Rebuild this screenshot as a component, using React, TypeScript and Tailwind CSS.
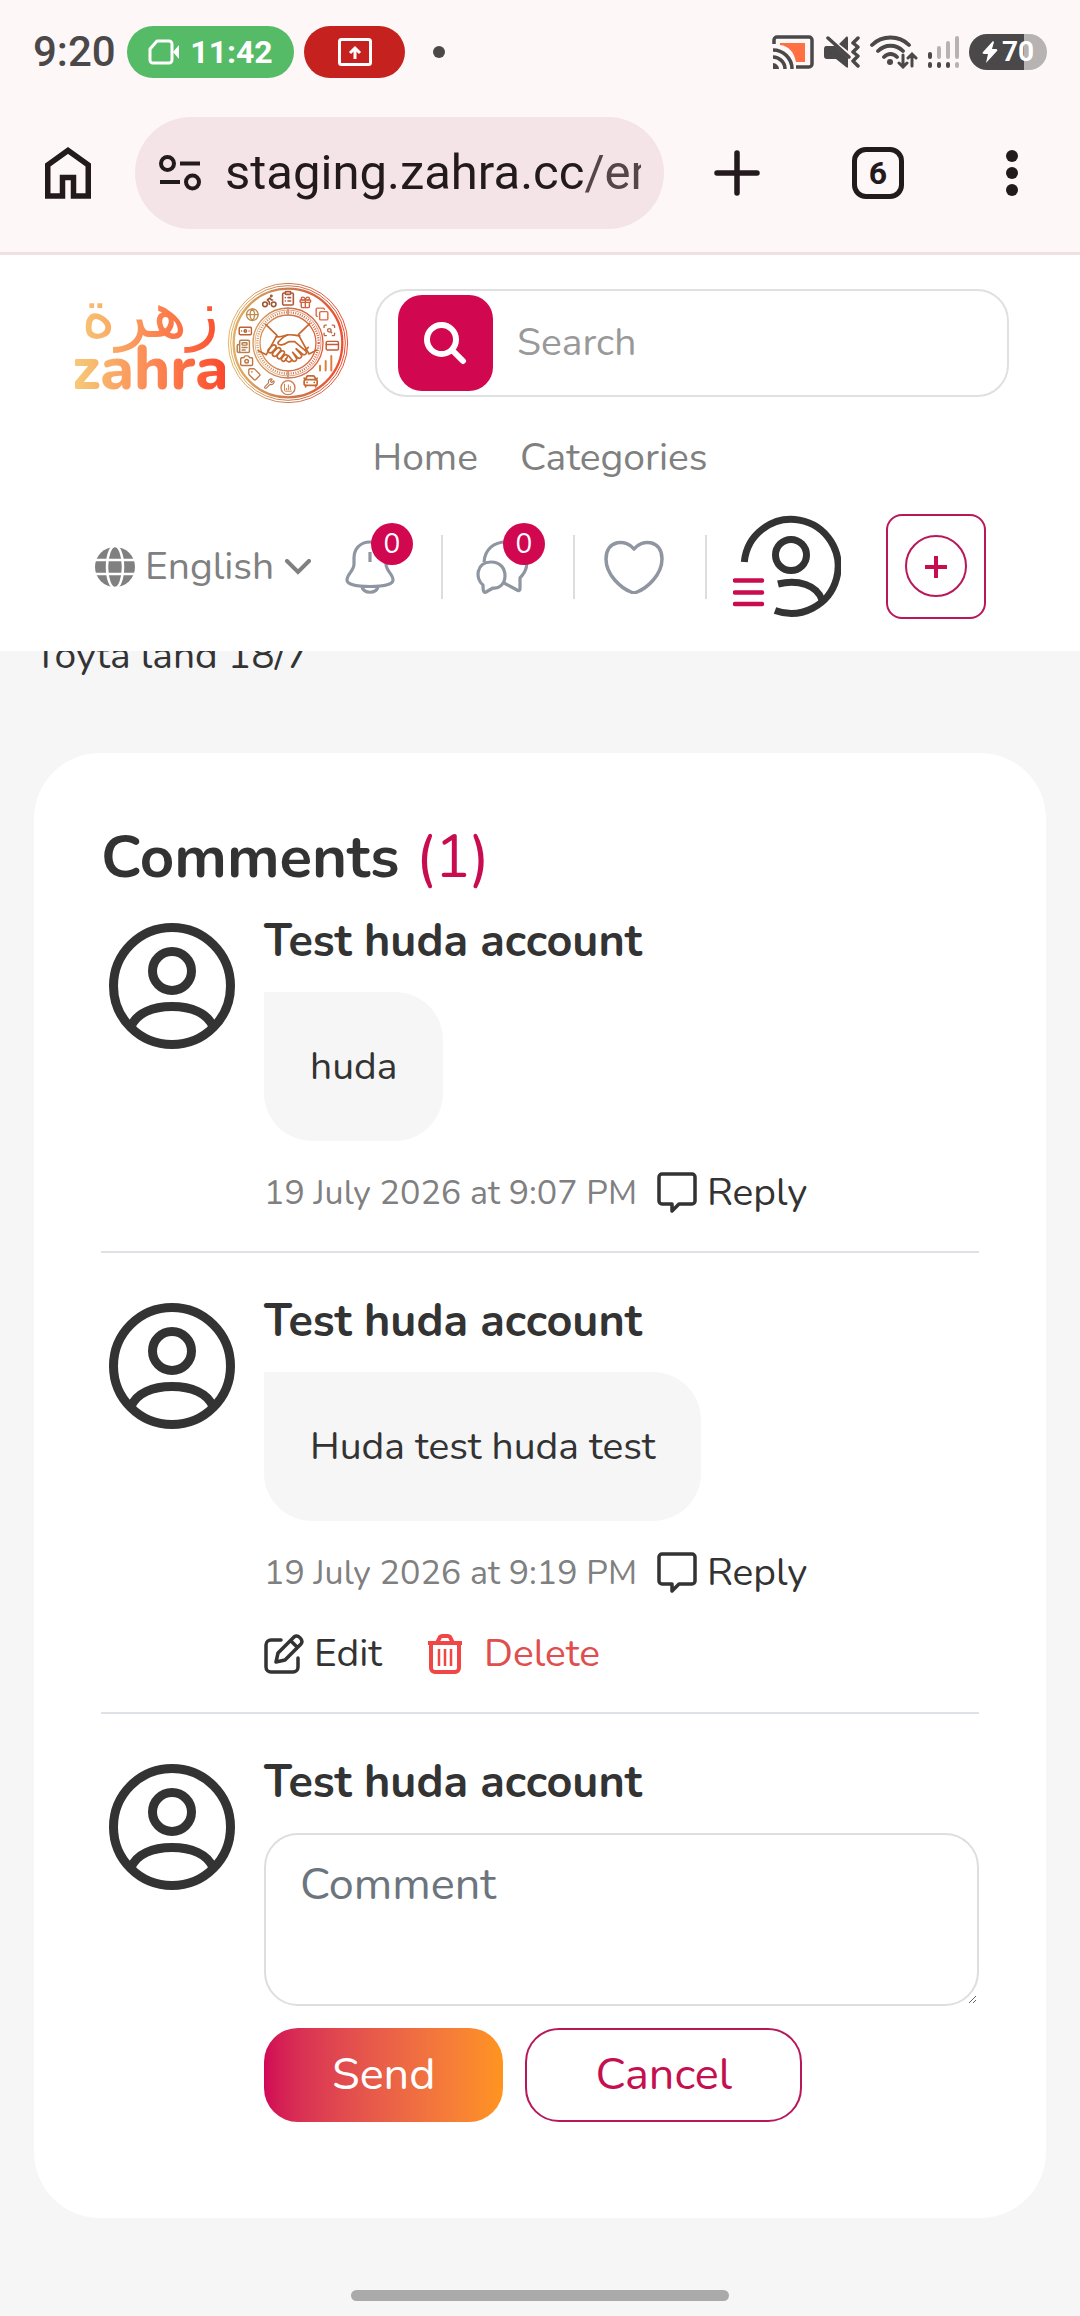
import React, { useState } from 'react';
import {
  Bike, Camera, CarFront, ChartColumn, ChartNoAxesColumnIncreasing, ClipboardList, Copy, CreditCard,
  Banknote, Gift, Globe, Newspaper, ScanSearch, Tag, Wrench,
} from 'lucide-react';

interface Comment {
  id: number;
  author: string;
  text: string;
  date: string;
  own?: boolean;
}

const COMMENTS: Comment[] = [
  { id: 1, author: 'Test huda account', text: 'huda', date: '19 July 2026 at 9:07 PM' },
  { id: 2, author: 'Test huda account', text: 'Huda test huda test', date: '19 July 2026 at 9:19 PM', own: true },
];

// Icons round the logo seal, clockwise from the top
const SEAL_ICONS = [
  { Icon: ClipboardList, x: 205, y: 67, size: 48, color: '#b0583a' },
  { Icon: Gift, x: 257, y: 79, size: 42, color: '#d0603f' },
  { Icon: Copy, x: 307, y: 114, size: 42, color: '#dc6c42' },
  { Icon: ScanSearch, x: 329, y: 163, size: 42, color: '#b96a48' },
  { Icon: CreditCard, x: 338, y: 209, size: 44, color: '#c65a34' },
  { Icon: ChartNoAxesColumnIncreasing, x: 318, y: 262, size: 58, color: '#e07c3c' },
  { Icon: CarFront, x: 273, y: 315, size: 52, color: '#c56834' },
  { Icon: ChartColumn, x: 205, y: 335, size: 28, color: '#cf7842' },
  { Icon: Wrench, x: 149, y: 323, size: 34, color: '#b57a58' },
  { Icon: Tag, x: 104, y: 295, size: 40, color: '#c27a48' },
  { Icon: Camera, x: 81, y: 254, size: 43, color: '#bd7644' },
  { Icon: Newspaper, x: 71, y: 211, size: 44, color: '#b5804e' },
  { Icon: Banknote, x: 77, y: 165, size: 44, color: '#bd6034' },
  { Icon: Globe, x: 98, y: 116, size: 42, color: '#c28c50' },
  { Icon: Bike, x: 149, y: 74, size: 48, color: '#9c5836' },
];

function Seal() {
  return (
    <svg className="w-[122px] h-[122px] shrink-0" viewBox="22 18 366 366" fill="none" aria-hidden="true">
      <defs>
        <linearGradient id="seal" gradientUnits="userSpaceOnUse" x1="24" y1="0" x2="386" y2="0">
          <stop offset="0" stopColor="#e5b566" />
          <stop offset="0.5" stopColor="#c97a50" />
          <stop offset="1" stopColor="#f04a2d" />
        </linearGradient>
      </defs>
      <g stroke="url(#seal)">
        <circle cx="205" cy="201" r="179" strokeWidth="3" />
        <circle cx="205" cy="201" r="172" strokeWidth="3" />
        <circle cx="205" cy="201" r="163" strokeWidth="7" />
        <circle cx="205" cy="201" r="105" strokeWidth="4" />
        <circle cx="205" cy="201" r="99" strokeWidth="2" />
        <circle cx="205" cy="201" r="92" strokeWidth="7" strokeDasharray="3 4" />
        <circle cx="205" cy="201" r="84" strokeWidth="4" />
        <circle cx="205" cy="335" r="21" strokeWidth="4" />
      </g>
      <path d="M205 95v24M205 283v24" stroke="#c98060" strokeWidth="4" />
      {/* Handshake */}
      <g stroke="#c56830" strokeWidth="5" strokeLinejoin="round" strokeLinecap="round">
        <path d="M138 145l34 33-32 58-24-12" />
        <path d="M270 143l-34 33 32 58 24-12" />
        <path d="M170 182c14 2 20-2 32-5 14-3 24 2 38 2" />
        <path d="M204 177c-16 4-20 14-29 22-2 6 6 9 14 7 10-2 14-9 22-9h14l32 27c8 7-1 16-9 10l-18-15" />
        <path d="M230 219l14 16c6 8-4 16-11 9l-14-15M219 229l11 17c4 8-7 14-13 6l-10-13" />
        <path d="M217 252c-6 10-17 5-19-3" />
        <path d="M147 219l11-10c8-6 15 3 9 9l-9 10c-8 6-18-2-11-9zM163 226l9-9c8-6 15 3 9 9l-11 13c-8 6-16-3-9-10zM176 234l8-8c8-5 14 3 8 9l-8 11c-7 6-15-2-10-9zM190 242l5-5c7-3 11 3 7 8l-6 9c-6 5-13-1-10-7z" />
        <path d="M256 222l10-8" />
      </g>
      {SEAL_ICONS.map(({ Icon, x, y, size, color }) => (
        <Icon key={`${x}-${y}`} x={x - size / 2} y={y - size / 2} width={size} height={size} color={color} strokeWidth={2.4} />
      ))}
    </svg>
  );
}

function Avatar() {
  return (
    <svg className="w-[126px] h-[126px]" viewBox="0 0 126 126" fill="none" stroke="#333333" strokeWidth="9" aria-hidden="true">
      <circle cx="63" cy="63" r="58.5" />
      <circle cx="63" cy="48" r="19.5" />
      <path d="M22 104c5-14 22-20.500 41-20.500s36 6.500 41 20.500" />
    </svg>
  );
}

function StatusBar() {
  return (
    <div className="h-26 pl-[33px] pr-[33px] flex items-center font-['Roboto',sans-serif] text-[#4a4849]">
      <span className="w-[82px] text-[42px] leading-none font-medium">9:20</span>
      <div className="ml-3 h-[52px] w-[167px] rounded-full bg-[#56bb66] text-white flex items-center justify-center gap-[10px]">
        <svg className="w-8 h-[26px]" viewBox="0 0 32 26" fill="none" aria-hidden="true">
          <path d="M9 2h12a3 3 0 0 1 3 3v16a3 3 0 0 1-3 3H5a3 3 0 0 1-3-3V10z" stroke="white" strokeWidth="3" strokeLinejoin="round" />
          <path d="M25 13l6-7v14z" fill="white" />
        </svg>
        <span className="text-[32px] leading-none font-bold">11:42</span>
      </div>
      <div className="ml-[10px] h-[52px] w-[101px] rounded-full bg-[#c5221f] flex items-center justify-center">
        <svg className="w-[34px] h-7" viewBox="0 0 34 28" fill="none" stroke="white" strokeWidth="3" aria-hidden="true">
          <rect x="1.500" y="1.500" width="31" height="25" rx="2" />
          <path d="M17 21V10M12 15l5-5 5 5" />
        </svg>
      </div>
      <div className="ml-7 size-3 rounded-full bg-[#4a4849]" />

      <div className="ml-auto flex items-center gap-[10px]">
        {/* Cast */}
        <svg className="w-[42px] h-[34px]" viewBox="0 0 42 34" fill="none" stroke="#4a4849" strokeWidth="3.500" aria-hidden="true">
          <path d="M8 8h25v19h-9C22 17 17 11 8 10z" fill="#ff7043" stroke="none" />
          <path d="M2 9V5a3 3 0 0 1 3-3h32a3 3 0 0 1 3 3v24a3 3 0 0 1-3 3H24" />
          <path d="M1 15c10 0 19 8 19 19M1 22c6 0 12 5 12 12" />
          <path d="M1 28c3 0 6 3 6 6H1z" fill="#4a4849" stroke="none" />
        </svg>
        {/* Muted, vibrating */}
        <svg className="w-9 h-8" viewBox="0 0 36 32" fill="#4a4849" aria-hidden="true">
          <path d="M2 10h9L24 22v9c0 1-1 1-2 0l-10-8H3c-2 0-3-1-3-3v-7c0-2 1-3 2-3zM15 8l7-7c1-1 2 0 2 1v13z" />
          <path d="M4 2l21 19" stroke="#4a4849" strokeWidth="3.500" strokeLinecap="round" />
          <path d="M34 2l-5 5 5 4-5 5 5 4-5 5 5 5" fill="none" stroke="#4a4849" strokeWidth="3.500" strokeLinecap="round" strokeLinejoin="round" />
        </svg>
        {/* Wifi */}
        <svg className="w-12 h-[34px]" viewBox="0 0 48 34" fill="none" stroke="#4a4849" strokeWidth="3.800" strokeLinecap="round" aria-hidden="true">
          <path d="M2 10c10-10 27-10 37 0M8 16c7-7 18-7 25 0M14 22c4-4 9-4 13 0" />
          <circle cx="20" cy="27" r="3" fill="#4a4849" stroke="none" />
          <path d="M33 20v12M29 28l4 4 4-4M42 31V19M38 23l4-4 4 4" strokeWidth="3" />
        </svg>
        {/* Signal */}
        <svg className="w-[31px] h-[34px]" viewBox="0 0 31 34" fill="none" strokeWidth="4" strokeLinecap="round" aria-hidden="true">
          <path d="M11 13v9M20 8v14M29 3v19M29 29v2" stroke="#b7b3b3" />
          <path d="M2 19v3M2 29v2M11 29v2M20 29v2" stroke="#4a4849" />
        </svg>
        <div className="w-[78px] h-9 rounded-full bg-linear-to-r from-[#4a4849] from-70% to-[#b7b3b3] to-70% flex items-center justify-center gap-1 text-white">
          <svg className="w-4 h-[22px]" viewBox="0 0 16 22" fill="white" aria-hidden="true">
            <path d="M11 0L1 11c-1 1 0 2 1 2h4L4 22l11-12c1-1 0-2-1-2h-4l2-7z" />
          </svg>
          <span className="text-[28px] leading-none font-bold">70</span>
        </div>
      </div>
    </div>
  );
}

function BrowserBar() {
  return (
    <div className="pt-[13px] pb-[23px] pl-[45px] pr-[62px] border-b-3 border-[#efe1e3] flex items-center text-[#231a1d]">
      <button aria-label="Home page">
        <svg className="w-[46px] h-[52px]" viewBox="0 0 46 52" fill="none" stroke="currentColor" strokeWidth="5.500" aria-hidden="true">
          <path d="M2.750 18L23 3.500 43.250 18v31H28.500V30.500h-11V49H2.750z" />
        </svg>
      </button>
      <button className="ml-[44px] h-28 flex-1 min-w-0 rounded-full bg-[#f4e4e7] pl-6 pr-[23px] flex items-center gap-6" aria-label="Address bar">
        <svg className="w-[42px] h-9 shrink-0" viewBox="0 0 42 36" fill="none" stroke="currentColor" strokeWidth="4" aria-hidden="true">
          <circle cx="8.500" cy="8.500" r="6.500" />
          <path d="M21 8.500h20M1 27h20" />
          <circle cx="33.500" cy="27" r="6.500" />
        </svg>
        <span className="flex-1 min-w-0 overflow-hidden whitespace-nowrap text-left text-[49px] leading-[60px] font-['Roboto',sans-serif]">
          staging.zahra.cc<span className="text-[#54454a]">/en</span>
        </span>
      </button>
      <button className="ml-[50px]" aria-label="New tab">
        <svg className="size-[46px]" viewBox="0 0 46 46" stroke="currentColor" strokeWidth="5.500" strokeLinecap="round" aria-hidden="true">
          <path d="M23 3v40M3 23h40" />
        </svg>
      </button>
      <button className="ml-[92px] size-[52px] rounded-[14px] border-[5px] border-current flex items-center justify-center text-[32px] leading-none font-bold font-['Roboto',sans-serif]">
        6
      </button>
      <button className="ml-[102px] flex flex-col gap-[5px]" aria-label="Menu">
        <span className="size-3 rounded-full bg-current" />
        <span className="size-3 rounded-full bg-current" />
        <span className="size-3 rounded-full bg-current" />
      </button>
    </div>
  );
}

function HeaderAction({ label, count, children }: { label: string; count?: number; children: React.ReactNode }) {
  return (
    <div className="w-[132px] h-16 pr-3 border-r-2 border-[#dddddd] flex items-center justify-center">
      <button className="relative" aria-label={label}>
        {children}
        {count !== undefined && (
          <span className="absolute -top-[17px] left-[27px] size-[42px] rounded-full bg-[#d1074f] text-white text-[28px] leading-[42px] text-center">
            {count}
          </span>
        )}
      </button>
    </div>
  );
}

function SiteHeader() {
  return (
    <header className="relative z-10 bg-white pt-[27px] pb-8 text-[39px] leading-[52px] text-[#808080]">
      <div className="pl-[75px] pr-[71px] flex items-center gap-[26px]">
        <a href="#" className="flex items-center gap-[2px]">
          <span className="w-[150px] flex flex-col items-center text-transparent bg-clip-text bg-linear-to-r from-[#f5c977] via-[#fb8a55] to-[#fb472c]">
            <span lang="ar" className="text-[66px] leading-[56px] font-['DejaVu_Sans',sans-serif]">زهرة</span>
            <span className="text-[61px] leading-[52px] pb-1 font-extrabold">zahra</span>
          </span>
          <Seal />
        </a>
        <form className="flex-1 min-w-0 h-[108px] rounded-[32px] border-2 border-[#e0e0e0] pl-[21px] pr-6 flex items-center gap-6">
          <button type="button" aria-label="Search" className="w-[95px] h-24 shrink-0 rounded-3xl bg-[#d1074f] flex items-center justify-center">
            <svg className="size-[43px]" viewBox="0 0 43 43" fill="none" stroke="white" strokeWidth="6" strokeLinecap="round" aria-hidden="true">
              <circle cx="17.500" cy="17.500" r="14.500" />
              <path d="M28 28l11 11" />
            </svg>
          </button>
          <input type="search" aria-label="Search" placeholder="Search" className="flex-1 min-w-0 outline-none placeholder:text-[#999999]" />
        </form>
      </div>

      <nav className="mt-7 flex justify-center gap-[42px]">
        <a href="#">Home</a>
        <a href="#">Categories</a>
      </nav>

      <div className="mt-[30px] pl-[95px] pr-[97px] h-[105px] flex items-center">
        <label className="flex items-center">
          <svg className="size-10" viewBox="0 0 40 40" fill="none" stroke="white" strokeWidth="2.500" aria-hidden="true">
            <circle cx="20" cy="20" r="20" fill="#808080" stroke="none" />
            <path d="M0 13h40M0 27h40" />
            <ellipse cx="20" cy="20" rx="8" ry="21" />
          </svg>
          <select aria-label="Language" className="ml-[10px] appearance-none outline-none bg-transparent w-[132px]">
            <option>English</option>
          </select>
          <svg className="ml-2 w-[26px] h-4" viewBox="0 0 26 16" fill="none" stroke="#808080" strokeWidth="4" strokeLinecap="round" aria-hidden="true">
            <path d="M2 2l11 11L24 2" />
          </svg>
        </label>

        <div className="ml-auto flex items-center">
          <HeaderAction label="Notifications" count={0}>
            <svg className="w-[52px] h-[54px]" viewBox="0 0 52 54" fill="none" stroke="#8f96a1" strokeWidth="3.200" aria-hidden="true">
              <path d="M26 2C16 2 10 9 10 18v6c0 7-7 10-7 16 0 4 8 6.500 23 6.500S49 44 49 40c0-6-7-9-7-16v-6C42 9 36 2 26 2z" />
              <path d="M18 47c2 7 14 7 16 0M26 12v10" />
            </svg>
          </HeaderAction>
          <HeaderAction label="Messages" count={0}>
            <svg className="w-[52px] h-[54px]" viewBox="0 0 52 54" fill="none" stroke="#8f96a1" strokeWidth="3.200" strokeLinejoin="round" aria-hidden="true">
              <path d="M8 22C9 9 18 2 30 2c12 0 21 8 21 20 0 8-3 12-7 16v11c0 2-2 2-3 1l-13-7" />
              <path d="M7 45C-1 39 0 22 15 22c10 0 14 7 14 14 0 8-6 13-12 12l-7 4c-2 1-3 0-3-7z" />
            </svg>
          </HeaderAction>
          <HeaderAction label="Favourites">
            <svg className="w-[60px] h-[54px]" viewBox="0 0 60 54" fill="none" stroke="#8f96a1" strokeWidth="3.500" strokeLinejoin="round" aria-hidden="true">
              <path d="M30 9C23-1 2-1 2 19c0 16 15 29 25 33 2 1 4 1 6 0 10-4 25-17 25-33C58-1 37-1 30 9z" />
            </svg>
          </HeaderAction>
          <button className="ml-[26px]" aria-label="Account">
            <svg className="w-[108px] h-[105px]" viewBox="0 0 108 105" fill="none" stroke="#333333" strokeWidth="7" aria-hidden="true">
              <path d="M11.300 48A47 47 0 1 1 42 96.500" />
              <circle cx="58" cy="41" r="15.500" />
              <path d="M45 70c20-5 39 1 44 16" />
              <path d="M2 66.500h27M2 78.500h27M2 90h27" stroke="#c90c50" strokeWidth="4.500" strokeLinecap="round" />
            </svg>
          </button>
          <button className="ml-[45px] w-[100px] h-[105px] rounded-2xl border-2 border-[#b8185a] flex items-center justify-center" aria-label="Add listing">
            <svg className="size-16" viewBox="0 0 64 64" fill="none" stroke="#b8185a" strokeWidth="2" aria-hidden="true">
              <circle cx="32" cy="31" r="30" />
              <path d="M32 21v22M21 32h22" stroke="#c90c50" strokeWidth="4" />
            </svg>
          </button>
        </div>
      </div>
    </header>
  );
}

function CommentRow({ comment }: { comment: Comment }) {
  return (
    <li className="pb-[30px] mb-[39px] border-b-2 border-[#dee2e6] flex">
      <div className="w-[163px] shrink-0 pl-2 pt-[11px]"><Avatar /></div>
      <div className="flex-1 min-w-0">
        <h3 className="text-[45px] leading-[60px] font-bold">{comment.author}</h3>
        <p className="mt-5 w-fit bg-[#f6f6f6] rounded-[48px] rounded-tl-none px-[46px] py-11 leading-[61px]">{comment.text}</p>
        <div className="mt-6 flex items-center">
          <time className="text-[34px] text-[#808080]">{comment.date}</time>
          <button className="ml-5 flex items-center gap-[10px]">
            <svg className="w-10 h-[42px]" viewBox="0 0 40 42" fill="none" stroke="#333333" strokeWidth="3.500" strokeLinejoin="round" aria-hidden="true">
              <path d="M5 2h30a3 3 0 0 1 3 3v24a3 3 0 0 1-3 3H22l-7 7v-7H5a3 3 0 0 1-3-3V5a3 3 0 0 1 3-3z" />
            </svg>
            Reply
          </button>
        </div>
        {comment.own && (
          <div className="mt-[25px] flex items-center gap-[46px]">
            <button className="flex items-center gap-[10px]">
              <svg className="size-10" viewBox="0 0 40 40" fill="none" stroke="#333333" strokeWidth="3.500" strokeLinejoin="round" strokeLinecap="round" aria-hidden="true">
                <path d="M17 6H7a5 5 0 0 0-5 5v22a5 5 0 0 0 5 5h22a5 5 0 0 0 5-5V24" />
                <path d="M12 28l2-9L30 3c4-3 10 3 7 7L21 26zM27 7l6 6" />
              </svg>
              Edit
            </button>
            <button className="flex items-center gap-[22px] text-[#e04e4e]">
              <svg className="w-[34px] h-10" viewBox="0 0 34 40" fill="none" stroke="#f04646" strokeWidth="4" aria-hidden="true">
                <path d="M0 9h34M9 9l3-6c1-1 1-1 2-1h6c1 0 1 0 2 1l3 6M3 9v25a4 4 0 0 0 4 4h20a4 4 0 0 0 4-4V9" />
                <path d="M11 15v17M17 15v17M23 15v17" strokeWidth="2.500" />
              </svg>
              Delete
            </button>
          </div>
        )}
      </div>
    </li>
  );
}

export default function App() {
  const [draft, setDraft] = useState('');

  return (
    <div className="min-h-screen flex flex-col bg-[#f6f6f6] font-['Nunito','Open_Sans',sans-serif] text-[#333333]">
      <div className="bg-[#fef7f8]">
        <StatusBar />
        <BrowserBar />
      </div>
      <SiteHeader />

      {/* The description line is scrolled half under the header */}
      <main className="-mt-10 pt-[19px] px-[34px] text-[39px] leading-[52px]">
        <p>Toyta land 18/7</p>

        <section className="mt-[71px] rounded-[66px] bg-white px-[67px] pt-[68px] pb-24 leading-[56px]">
          <h2 className="text-[60px] leading-[72px] font-bold">
            Comments <span className="font-normal text-[#c90c50]">(1)</span>
          </h2>
          <ul className="mt-[19px]">
            {COMMENTS.map((c) => <CommentRow key={c.id} comment={c} />)}
          </ul>

          <form className="flex" onSubmit={(e) => e.preventDefault()}>
            <div className="w-[163px] shrink-0 pl-2 pt-[11px]"><Avatar /></div>
            <div className="flex-1 min-w-0 text-[45px]">
              <h3 className="leading-[60px] font-bold">Test huda account</h3>
              <textarea
                aria-label="Comment"
                placeholder="Comment"
                value={draft}
                onChange={(e) => setDraft(e.target.value)}
                className="mt-5 block w-full h-[173px] rounded-[34px] border-2 border-[#dedede] px-[34px] pt-5 leading-[60px] outline-none placeholder:text-[#6c757d]"
              />
              <div className="mt-[22px] flex gap-[22px]">
                <button className="h-[94px] px-[68px] rounded-[34px] bg-linear-to-r from-[#d10656] to-[#ff941e] text-white">Send</button>
                <button type="button" onClick={() => setDraft('')} className="h-[94px] px-[68px] rounded-[34px] border-2 border-[#b8185a] text-[#c4104f]">Cancel</button>
              </div>
            </div>
          </form>
        </section>
      </main>

      <div className="mt-[72px] mb-[15px] mx-auto w-[35%] h-[11px] rounded-full bg-[#aaaaaa]" />
    </div>
  );
}
